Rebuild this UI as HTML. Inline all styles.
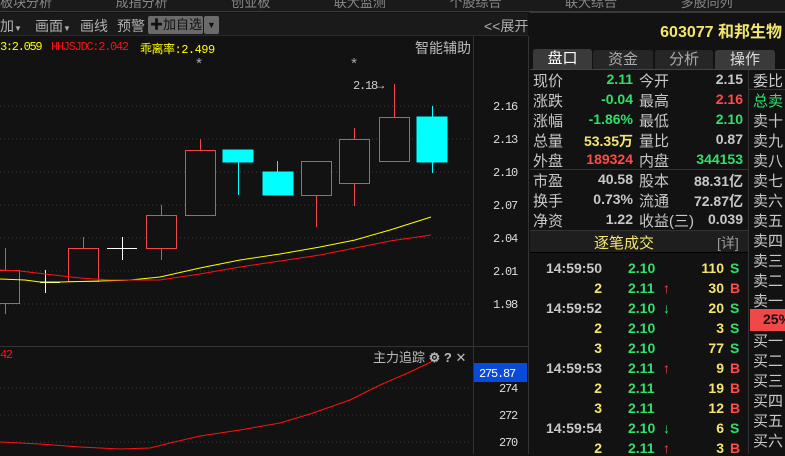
<!DOCTYPE html>
<html><head><meta charset="utf-8"><style>
*{margin:0;padding:0;box-sizing:border-box}
body{width:785px;height:454px;background:#121212;overflow:hidden;position:relative;font-family:"Liberation Sans","Noto Sans CJK SC",sans-serif;font-size:13px;color:#c8c8c8}
.a{position:absolute;white-space:nowrap}
.n{font-weight:bold;font-size:14px}
.l{font-size:15px}
.g{color:#2fe06a}.r{color:#ff4a4a}.y{color:#f4e66c}.w{color:#c8c8c8}
.m{font-family:"Liberation Mono",monospace;font-size:12px;letter-spacing:-1.3px}
</style></head><body>
<div class="a" style="left:0;top:0;width:785px;height:12px;background:#1a1a1a;border-bottom:1px solid #3a3a3a;overflow:hidden">
<div class="a" style="left:0;top:-8px;font-size:13px;color:#888;word-spacing:60px">板块分析 成指分析 创业板 联大监测 个股综合 联大综合 多股同列 个股分析</div>
</div>
<div class="a" style="left:0;top:13px;width:528px;height:23px;background:#1a1a1a;border-bottom:1px solid #2a2a2a"></div>
<div class="a" style="left:0;top:16px;color:#b0b0b0;font-size:14px">加<span style="font-size:8px">▼</span></div>
<div class="a" style="left:35px;top:16px;color:#b0b0b0;font-size:14px">画面<span style="font-size:8px">▼</span></div>
<div class="a" style="left:80px;top:16px;color:#b0b0b0;font-size:14px">画线</div>
<div class="a" style="left:117px;top:16px;color:#b0b0b0;font-size:14px">预警</div>
<div class="a" style="left:148px;top:16px;width:55px;height:18px;background:#6a6a6a;border-radius:2px;color:#111;padding-left:2px;line-height:18px;font-size:13px"><b>✚</b>加自选</div>
<div class="a" style="left:204px;top:16px;width:15px;height:18px;background:#6a6a6a;border-radius:2px;color:#111;font-size:9px;text-align:center;line-height:18px">▼</div>
<div class="a" style="left:484px;top:16px;color:#b0b0b0;font-size:14px">&lt;&lt;展开</div>
<svg class="a" style="left:0;top:36px" width="530" height="418" viewBox="0 36 530 418">
<g stroke="#3a3a3a" stroke-dasharray="1,3">
<line x1="0" y1="106" x2="472" y2="106"/><line x1="0" y1="139" x2="472" y2="139"/><line x1="0" y1="172" x2="472" y2="172"/><line x1="0" y1="205" x2="472" y2="205"/><line x1="0" y1="238" x2="472" y2="238"/><line x1="0" y1="271" x2="472" y2="271"/><line x1="0" y1="304" x2="472" y2="304"/>
<line x1="0" y1="388" x2="472" y2="388"/><line x1="0" y1="415" x2="472" y2="415"/><line x1="0" y1="442" x2="472" y2="442"/>
</g>
<line x1="473.5" y1="36" x2="473.5" y2="454" stroke="#333"/>
<line x1="528.5" y1="0" x2="528.5" y2="454" stroke="#333"/>
<line x1="0" y1="346.5" x2="528" y2="346.5" stroke="#333"/>
<g stroke="#f04848" fill="none">
<line x1="5.5" y1="248" x2="5.5" y2="314"/><rect x="-5.5" y="270.5" width="25" height="33" fill="#121212"/>
<line x1="83.5" y1="237" x2="83.5" y2="248"/><rect x="68.5" y="248.5" width="30" height="33" fill="#121212"/>
<line x1="161.5" y1="205" x2="161.5" y2="215"/><line x1="161.5" y1="248" x2="161.5" y2="260"/><rect x="146.5" y="215.5" width="30" height="33" fill="#121212"/>
<line x1="200.5" y1="139" x2="200.5" y2="150"/><rect x="185.5" y="150.5" width="30" height="65" fill="#121212"/>
<line x1="316.5" y1="195" x2="316.5" y2="227"/><rect x="301.5" y="161.5" width="30" height="34" fill="#121212"/>
<line x1="354.5" y1="128" x2="354.5" y2="139"/><line x1="354.5" y1="183" x2="354.5" y2="206"/><rect x="339.5" y="139.5" width="30" height="44" fill="#121212"/>
<line x1="394.5" y1="84" x2="394.5" y2="117"/><rect x="379.5" y="117.5" width="30" height="44" fill="#121212"/>
</g>
<g stroke="#00ffff" fill="#00ffff">
<line x1="238.5" y1="150" x2="238.5" y2="195"/><rect x="223" y="150" width="30" height="12"/>
<line x1="277.5" y1="161" x2="277.5" y2="172"/><rect x="263" y="172" width="30" height="23"/>
<line x1="432.5" y1="106" x2="432.5" y2="173"/><rect x="417" y="117" width="30" height="45"/>
</g>
<g stroke="#fff">
<line x1="40" y1="282.5" x2="60" y2="282.5"/><line x1="45.5" y1="270" x2="45.5" y2="293"/>
<line x1="107" y1="248.5" x2="137" y2="248.5"/><line x1="122.5" y1="237" x2="122.5" y2="260"/>
</g>
<polyline fill="none" stroke="#ffff00" points="0,279 25,280 40,282 60,282 100,281 130,280 160,277 200,268 240,260 280,254 320,247 355,240 390,230 431,217"/>
<polyline fill="none" stroke="#ff1010" points="0,270 20,271 45,274 80,278 110,280 160,280 200,274 240,267 280,261 320,255 355,248 390,241 431,235"/>
<polyline fill="none" stroke="#ff1010" points="0,442 40,444 80,447 120,449 150,448 170,443 200,436 240,430 280,423 310,414 350,400 380,385 410,372 431,362"/>
<g font-family="Liberation Mono" font-size="12" letter-spacing="-1.2">
<text x="353" y="89" fill="#ccc">2.18→</text>
<g fill="#ddd">
<text x="493" y="110">2.16</text><text x="493" y="143">2.13</text><text x="493" y="176">2.10</text><text x="493" y="209">2.07</text><text x="493" y="242">2.04</text><text x="493" y="275">2.01</text><text x="493" y="308">1.98</text>
<text x="499" y="392">274</text><text x="499" y="419">272</text><text x="499" y="446">270</text>
</g>
<rect x="474" y="363" width="53" height="19" fill="#0a4ad8"/>
<text x="479" y="377" fill="#fff">275.87</text>
</g>
<text x="199" y="68" fill="#aaa" font-size="15" text-anchor="middle">*</text>
<text x="354" y="68" fill="#aaa" font-size="15" text-anchor="middle">*</text>
</svg>
<div class="a m" style="left:0;top:40px;color:#ffff00">3:2.059</div>
<div class="a m" style="left:51px;top:40px;color:#ff1010">HHJSJDC:2.042</div>
<div class="a m" style="left:140px;top:40px;color:#ffff00;letter-spacing:-0.5px">乖离率:2.499</div>
<div class="a" style="left:415px;top:38px;color:#bbb;font-size:14px">智能辅助</div>
<div class="a m" style="left:0;top:348px;color:#ff1010">42</div>
<div class="a" style="left:373px;top:347px;color:#bbb;font-size:13px">主力追踪 <b>⚙</b> <b>?</b> ✕</div>
<div class="a" style="left:530px;top:12px;width:255px;height:1px;background:#3a3a3a"></div>
<div class="a n y" style="right:3px;top:18px;font-size:16px">603077 和邦生物</div>
<div class="a l" style="left:533px;top:49px;width:59px;height:20px;background:#3a3a3a;border-radius:3px 3px 0 0;color:#fff;text-align:center;line-height:20px">盘口</div>
<div class="a l" style="left:593px;top:50px;width:60px;height:19px;background:#262626;border-radius:3px 3px 0 0;color:#aaa;text-align:center;line-height:19px">资金</div>
<div class="a l" style="left:655px;top:50px;width:58px;height:19px;background:#262626;border-radius:3px 3px 0 0;color:#aaa;text-align:center;line-height:19px">分析</div>
<div class="a l" style="left:715px;top:50px;width:60px;height:19px;background:#3a3a3a;border-radius:3px 3px 0 0;color:#ddd;text-align:center;line-height:19px">操作</div>
<div class="a" style="left:530px;top:69px;width:255px;height:1px;background:#444"></div>
<div class="a" style="left:748px;top:70px;width:1px;height:384px;background:#333"></div>
<div class="a" style="left:749px;top:89px;width:36px;height:1px;background:#333"></div>
<div class="a" style="left:530px;top:169px;width:218px;height:1px;background:#333"></div>
<div class="a" style="left:530px;top:230px;width:218px;height:23px;background:#1e1e1e;border-top:1px solid #333;border-bottom:1px solid #000"></div>
<div class="a y l" style="left:594px;top:232px">逐笔成交</div>
<div class="a" style="left:717px;top:233px;color:#999;font-size:14px">[详]</div>
<div id="q"></div>
<script>
var h='';
function t(x,y,s,c,al,b,lb){h+='<div class="a '+(c||'')+(b?' n':'')+(lb?' l':'')+'" style="'+(al?'right:'+(785-x)+'px':'left:'+x+'px')+';top:'+(y-(lb?10:9))+'px">'+s+'</div>';}
var L=[['现价','2.11','g','今开','2.15','w'],['涨跌','-0.04','g','最高','2.16','r'],['涨幅','-1.86%','g','最低','2.10','g'],['总量','53.35万','y','量比','0.87','w'],['外盘','189324','r','内盘','344153','g'],['市盈','40.58','w','股本','88.31亿','w'],['换手','0.73%','w','流通','72.87亿','w'],['净资','1.22','w','收益(三)','0.039','w']];
L.forEach(function(r,i){var y=80+i*20;t(533,y,r[0],'w',0,0,1);t(633,y,r[1],r[2],1,1);t(639,y,r[3],'w',0,0,1);t(743,y,r[4],r[5],1,1);});
var B=['委比','总卖','卖十','卖九','卖八','卖七','卖六','卖五','卖四','卖三','卖二','卖一'];
B.forEach(function(s,i){t(753,80+i*20,s,i==1?'g':'w',0,0,1);});
h+='<div class="a" style="left:750px;top:309px;width:35px;height:22px;background:#f04848"></div><div class="a n" style="left:763px;top:311px;color:#111">25%</div>';
['买一','买二','买三','买四','买五','买六'].forEach(function(s,i){t(753,340+i*20,s,'w',0,0,1);});
var T=[['14:59:50','2.10','','110','S'],['2','2.11','u','30','B'],['14:59:52','2.10','d','20','S'],['2','2.10','','3','S'],['3','2.10','','77','S'],['14:59:53','2.11','u','9','B'],['2','2.11','','19','B'],['3','2.11','','12','B'],['14:59:54','2.10','d','6','S'],['2','2.11','u','3','B']];
T.forEach(function(r,i){var y=269+i*20;t(602,y,r[0],r[0].length>1?'w':'y',1,1);t(628,y,r[1],'g',0,1);if(r[2])t(663,y,r[2]=='u'?'↑':'↓',r[2]=='u'?'r':'g',0,1);t(724,y,r[3],'y',1,1);t(730,y,r[4],r[4]=='S'?'g':'r',0,1);});
document.getElementById('q').innerHTML=h;
</script>
</body></html>
